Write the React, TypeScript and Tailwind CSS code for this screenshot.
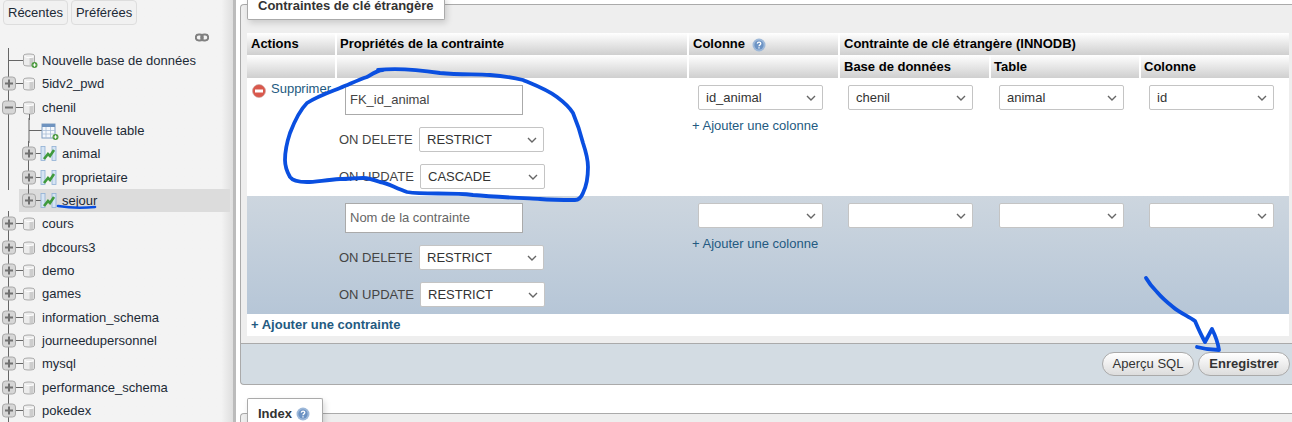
import React from "react";

const FONT = "[font-family:'Liberation_Sans',Arial,sans-serif]";

function Db({ x, y, add }: { x: number; y: number; add?: boolean }) {
  return (
    <g transform={`translate(${x} ${y})`}>
      <path d="M0.5 2.5C0.5 0.5 11.5 0.5 11.5 2.5V11.5C11.5 13.5 0.5 13.5 0.5 11.5Z" fill="#ececec" stroke="#a8a8a8" />
      <path d="M1.5 3.5C4 5 8 5 10.5 3.5" fill="none" stroke="#fff" />
      <rect x="6.5" y="5" width="4" height="7" fill="#cdcdcd" />
      {add && (
        <g>
          <circle cx="11.5" cy="12" r="3" fill="#4c9a3f" />
          <path d="M9.8 12H13.2M11.5 10.3V13.7" stroke="#fff" strokeWidth="1" />
        </g>
      )}
    </g>
  );
}

function Toggle({ x, minus }: { x: number; minus?: boolean }) {
  return (
    <g>
      <rect x={x + 0.5} y="6" width="13" height="13" rx="3" fill="#d6d6d6" stroke="#a8a8a8" />
      <path d={minus ? `M${x + 3} 12.5H${x + 11}` : `M${x + 3} 12.5H${x + 11}M${x + 7} 8.5V16.5`} stroke="#707070" strokeWidth="2" />
    </g>
  );
}

function Tbl({ x }: { x: number }) {
  return (
    <g transform={`translate(${x} 4)`}>
      <rect x="1" y="1.5" width="4" height="14" fill="#d6e4f3" stroke="#8fb0d4" strokeWidth="0.8" />
      <rect x="12" y="1.5" width="4" height="14" fill="#d6e4f3" stroke="#8fb0d4" strokeWidth="0.8" />
      <path d="M4 14 L8 9 L10 11 L14 5" fill="none" stroke="#3f9a3c" strokeWidth="2.6" />
    </g>
  );
}

function NewTbl({ x }: { x: number }) {
  return (
    <g transform={`translate(${x} 4)`}>
      <rect x="1" y="2" width="13" height="14" fill="#f5f8fc" stroke="#7f9dc2" />
      <rect x="1" y="2" width="13" height="3" fill="#6f93bf" />
      <path d="M1 8.5H14M1 12H14M5 5V16M9.5 5V16" stroke="#a8bdd6" strokeWidth="0.8" />
      <circle cx="14.5" cy="15" r="3" fill="#4c9a3f" />
      <path d="M12.8 15H16.2M14.5 13.3V16.7" stroke="#fff" />
    </g>
  );
}

function Row({ label, kind, active }: { label: string; kind: "new" | "db" | "open" | "newt" | "t"; active?: boolean }) {
  const child = kind === "newt" || kind === "t";
  const w = child ? (active ? 43 : 62) : 42;
  return (
    <div className={`flex items-center h-[23.33px] ${active ? "bg-[#dcdcdc] ml-[19px] mr-[3px]" : ""}`}>
      <svg width={w} height="25" fill="none" className="shrink-0 -my-px" viewBox={`${active ? 19 : 0} 0 ${w} 25`}>
        {!active && <path d="M8.5 0V25" stroke="#666" />}
        {kind === "new" && <path d="M8.5 12.5H24" stroke="#666" />}
        {kind === "new" && <Db x={23} y={5} add />}
        {(kind === "db" || kind === "open") && <path d="M15 12.5H24" stroke="#666" />}
        {(kind === "db" || kind === "open") && <Toggle x={2} minus={kind === "open"} />}
        {(kind === "db" || kind === "open") && <Db x={23} y={6} />}
        {kind === "open" && <path d="M29.5 19V25" stroke="#666" />}
        {kind === "newt" && <path d="M29 0V25M29 12.5H42" stroke="#666" />}
        {kind === "newt" && <NewTbl x={41} />}
        {kind === "t" && <path d={active ? "M28.5 0V7M36 12.5H42" : "M28.5 0V25M36 12.5H42"} stroke="#666" />}
        {kind === "t" && <Toggle x={22} />}
        {kind === "t" && <Tbl x={40} />}
      </svg>
      <span className="text-[13px] text-[#1c2a36] whitespace-nowrap">{label}</span>
    </div>
  );
}

function Select({ value = "", w = "w-[125px]", className = "" }: { value?: string; w?: string; className?: string }) {
  return (
    <div className={`${w} h-[25px] shrink-0 bg-white border border-[#c4c4c4] rounded-[2px] flex items-center justify-between pl-[7px] pr-[6px] text-[13px] text-[#333] ${className}`}>
      <span>{value}</span>
      <svg width="10" height="6" viewBox="0 0 10 6"><path d="M1 1L5 5L9 1" fill="none" stroke="#666" strokeWidth="1.4" /></svg>
    </div>
  );
}

function Props({ name, placeholder, del, upd }: { name?: string; placeholder?: string; del: string; upd: string }) {
  return (
    <div className="pl-[3px] flex flex-col">
      <div className={`ml-[6px] w-[178px] h-[30px] bg-white border border-[#aaa] flex items-center px-[4px] text-[13px] ${name ? "text-[#444]" : "text-[#666]"}`}>{name || placeholder}</div>
      <div className="flex items-center gap-[6px] mt-[12px] h-[25px] text-[13px] text-[#444]">
        <span className="w-[74px] whitespace-nowrap">ON DELETE</span>
        <Select value={del} />
      </div>
      <div className="flex items-center gap-[6px] mt-[12px] h-[25px] text-[13px] text-[#444]">
        <span className="w-[75px] whitespace-nowrap">ON UPDATE</span>
        <Select value={upd} />
      </div>
    </div>
  );
}

function Help() {
  return (
    <svg width="14" height="14" viewBox="0 0 14 14" className="inline-block">
      <circle cx="7" cy="7" r="6.5" fill="#9db8d9" />
      <circle cx="7" cy="7" r="4.6" fill="#6c93c4" />
      <path d="M5.3 5.6C5.5 3.6 8.8 3.7 8.8 5.6C8.8 6.9 7 6.8 7 8.2M7 9.3V10.5" fill="none" stroke="#fff" strokeWidth="1.3" />
    </svg>
  );
}

const th = "bg-gradient-to-b from-white to-[#cfcfcf] font-bold text-[13px] text-black text-left align-middle p-0 pl-[3px] border-r-2 border-white last:border-r-0";
const ajouter = "text-[13px] leading-[15px] text-[#235a81]";

const names = ["cours", "dbcours3", "demo", "games", "information_schema", "journeedupersonnel", "mysql", "performance_schema", "pokedex"];

export default function App() {
  return (
    <div className={`relative w-[1292px] h-[422px] overflow-hidden flex bg-white ${FONT}`}>
      <aside className="w-[233px] h-full shrink-0 bg-gradient-to-r from-[#f3f3f3] from-[95%] to-[#dedede] flex flex-col">
        <div className="flex gap-[3px] pl-[3px] h-[25px] items-start">
          <div className="h-[25px] px-[4px] pt-[1px] flex items-center bg-[#f1f1f1] border border-[#ddd] rounded-[4px] text-[13px] text-[#1c2a36]">Récentes</div>
          <div className="h-[25px] px-[4px] pt-[1px] flex items-center bg-[#f1f1f1] border border-[#ddd] rounded-[4px] text-[13px] text-[#1c2a36]">Préférées</div>
        </div>
        <div className="flex justify-end pr-[24px] mt-[8px] h-[9px]">
          <svg width="14" height="9" viewBox="0 0 14 9"><rect x="0.8" y="1.5" width="7" height="6" rx="3" fill="none" stroke="#808080" strokeWidth="2" /><rect x="6.2" y="1.5" width="7" height="6" rx="3" fill="none" stroke="#808080" strokeWidth="2" /></svg>
        </div>
        <div className="mt-[7px]">
          <Row label="Nouvelle base de données" kind="new" />
          <Row label="5idv2_pwd" kind="db" />
          <Row label="chenil" kind="open" />
          <Row label="Nouvelle table" kind="newt" />
          <Row label="animal" kind="t" />
          <Row label="proprietaire" kind="t" />
          <Row label="sejour" kind="t" active />
          {names.map((n) => <Row key={n} label={n} kind="db" />)}
        </div>
      </aside>
      <div className="w-[3px] h-full shrink-0 bg-[#bbb]" />
      <main className="flex-1 min-w-0 pl-[4px] flex flex-col pt-[4px]">
        <section className="relative h-[340px] shrink-0 bg-[#eee] border border-[#aaa] border-r-0 rounded-tl-[4px] pl-[6px] pr-[2px]">
          <div className="-mt-[9px] w-[198px] h-[24px] bg-white border border-[#aaa] border-t-0 rounded-b-[2px] shadow-[2px_3px_6px_rgba(0,0,0,0.15)] flex items-end pb-[4px] pl-[10px] text-[13px] font-bold text-[#333] whitespace-nowrap">Contraintes de clé étrangère</div>
          <table className="mt-[13px] w-[1042px] table-fixed border-collapse">
            <colgroup>
              <col className="w-[89px]" />
              <col className="w-[352px]" />
              <col className="w-[151px]" />
              <col className="w-[151px]" />
              <col className="w-[150px]" />
              <col className="w-[149px]" />
            </colgroup>
            <thead>
              <tr className="h-[22px]">
                <th className={`${th} pl-[4px]`}>Actions</th>
                <th className={th}>Propriétés de la contrainte</th>
                <th className={`${th} pl-[4px]`}>Colonne <span className="ml-[3px] align-middle"><Help /></span></th>
                <th className={`${th} pl-[4px]`} colSpan={3}>Contrainte de clé étrangère (INNODB)</th>
              </tr>
              <tr className="h-[23px]">
                <th className={th}></th>
                <th className={th}></th>
                <th className={th}></th>
                <th className={`${th} pl-[4px]`}>Base de données</th>
                <th className={th}>Table</th>
                <th className={th}>Colonne</th>
              </tr>
            </thead>
            <tbody>
              <tr className="h-[118px] bg-white align-top">
                <td className="p-0 pt-[1px] pl-[5px]">
                  <div className="flex items-center gap-[5px] text-[13px] text-[#235a81] whitespace-nowrap">
                    <svg width="14" height="14" viewBox="0 0 14 14" className="shrink-0 mt-[4px]"><circle cx="7" cy="7" r="6.5" fill="#d9584c" stroke="#c9a5a0" strokeWidth="0.6" /><rect x="3" y="5.5" width="8" height="3" fill="#fff" /></svg>
                    Supprimer
                  </div>
                </td>
                <td className="p-0 pt-[7px]"><Props name="FK_id_animal" del="RESTRICT" upd="CASCADE" /></td>
                <td className="p-0 pt-[7px] pl-[10px]">
                  <Select value="id_animal" />
                  <div className={`${ajouter} mt-[8px] -ml-[6px]`}>+ Ajouter une colonne</div>
                </td>
                <td className="p-0 pt-[7px] pl-[9px]"><Select value="chenil" /></td>
                <td className="p-0 pt-[7px] pl-[9px]"><Select value="animal" /></td>
                <td className="p-0 pt-[7px] pl-[9px]"><Select value="id" /></td>
              </tr>
              <tr className="h-[118px] bg-gradient-to-b from-[#cdd6df] to-[#b6c6d7] align-top">
                <td className="p-0"></td>
                <td className="p-0 pt-[7px]"><Props placeholder="Nom de la contrainte" del="RESTRICT" upd="RESTRICT" /></td>
                <td className="p-0 pt-[7px] pl-[10px]">
                  <Select />
                  <div className={`${ajouter} mt-[8px] -ml-[6px]`}>+ Ajouter une colonne</div>
                </td>
                <td className="p-0 pt-[7px] pl-[9px]"><Select /></td>
                <td className="p-0 pt-[7px] pl-[9px]"><Select /></td>
                <td className="p-0 pt-[7px] pl-[9px]"><Select /></td>
              </tr>
              <tr className="h-[22px] bg-white">
                <td colSpan={6} className="p-0 pl-[4px] text-[13px] font-bold text-[#235a81]">+ Ajouter une contrainte</td>
              </tr>
            </tbody>
          </table>
        </section>
        <div className="h-[41px] shrink-0 bg-[#d3dce3] border border-[#aaa] border-t-0 border-r-0 rounded-bl-[4px] flex items-center justify-end gap-[4px] pr-[2px]">
          <div className="w-[92px] h-[24px] rounded-[12px] border border-[#aaa] bg-gradient-to-b from-white to-[#ddd] flex items-center justify-center text-[13px] text-[#333]">Aperçu SQL</div>
          <div className="w-[92px] h-[24px] rounded-[12px] border border-[#aaa] bg-gradient-to-b from-white to-[#ddd] flex items-center justify-center text-[13px] font-bold text-[#333]">Enregistrer</div>
        </div>
        <div className="mt-[28px] flex-1 bg-[#eee] border-t border-l border-[#aaa] rounded-tl-[4px] pl-[6px]">
          <div className="-mt-[16px] w-[76px] h-[30px] bg-white border border-[#aaa] border-b-0 rounded-t-[2px] shadow-[2px_3px_6px_rgba(0,0,0,0.15)] flex items-center gap-[4px] pl-[10px] text-[13px] font-bold text-[#333]">Index <Help /></div>
        </div>
      </main>
      <svg className="absolute inset-0 pointer-events-none" width="1292" height="422" viewBox="0 0 1292 422" fill="none" stroke="#0a4fe0" strokeWidth="3.8" strokeLinecap="round" strokeLinejoin="round">
        <path d="M378 70C395 68 420 70 440 73C460 75 475 74 490 75C505 76 515 78 523 80C535 85 548 90 557 97C565 103 570 108 573 113C578 125 581 135 583 143C586 152 588 160 588 167C588 178 586 187 583 193C581 198 578 200 575 200C565 200 552 200 540 199C520 198 495 197 473 195C450 192 425 195 407 192C395 188 388 183 380 182C372 179 368 178 363 178C355 178 348 179 340 179C325 180 315 182 307 182C298 182 292 180 290 177C286 170 285 165 285 160C285 152 287 142 290 133C295 120 300 110 307 103C318 96 330 92 340 88C350 84 358 80 367 77C372 74 378 70 383 70" />
        <path d="M58 206C70 208 85 208 95 207" strokeWidth="2.6" />
        <path d="M1146 278C1150 285 1153 288 1157 292C1162 298 1168 303 1173 307C1180 313 1188 316 1195 321C1198 328 1201 335 1205 342L1212 329C1215 335 1218 343 1219 350C1212 350 1204 349 1197 347" />
      </svg>
    </div>
  );
}
